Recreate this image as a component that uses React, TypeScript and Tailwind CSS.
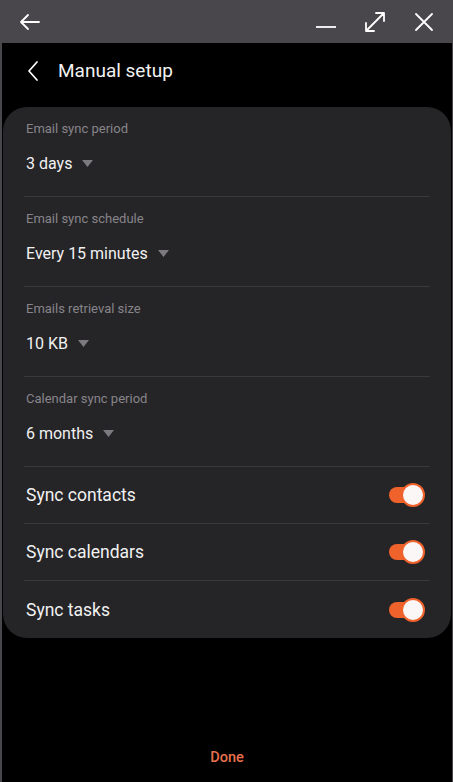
import { useState } from "react";

const pickers = [
  { label: "Email sync period", value: "3 days" },
  { label: "Email sync schedule", value: "Every 15 minutes" },
  { label: "Emails retrieval size", value: "10 KB" },
  { label: "Calendar sync period", value: "6 months" },
];

function Toggle({ on, onClick }: { on: boolean; onClick: () => void }) {
  return (
    <button onClick={onClick} className="relative w-[38px] h-[24px] flex items-center">
      <span className={`absolute left-[2px] right-[2px] h-[16px] rounded-full ${on ? "bg-[#f0622b]" : "bg-[#5a585c]"}`}></span>
      <span
        className={`absolute top-0 w-[24px] h-[24px] rounded-full bg-[#fbf7f6] border-2 ${on ? "right-0 border-[#f0622b]" : "left-0 border-[#5a585c]"}`}
      ></span>
    </button>
  );
}

export default function App() {
  const [toggles, setToggles] = useState([true, true, true]);
  const names = ["Sync contacts", "Sync calendars", "Sync tasks"];

  return (
    <div
      className="w-[453px] h-[782px] bg-[#49474b] flex flex-col overflow-hidden"
      style={{ fontFamily: "Roboto, 'Noto Sans', sans-serif" }}
    >
      {/* Title bar */}
      <div className="h-[43px] flex items-center px-[18px] text-white">
        <svg width="24" height="24" viewBox="0 0 24 24" fill="none" stroke="currentColor" strokeWidth="1.8" strokeLinecap="round" strokeLinejoin="round">
          <path d="M21 12H3M10 5l-7 7 7 7" />
        </svg>
        <div className="ml-auto flex items-center gap-[27px]">
          <svg width="22" height="22" viewBox="0 0 22 22" fill="none" stroke="currentColor" strokeWidth="1.8">
            <path d="M1 16h20" />
          </svg>
          <svg width="22" height="22" viewBox="0 0 22 22" fill="none" stroke="currentColor" strokeWidth="1.8" strokeLinecap="round" strokeLinejoin="round">
            <path d="M2 20L20 2M12 2h8v8M2 12v8h8" />
          </svg>
          <svg width="22" height="22" viewBox="0 0 22 22" fill="none" stroke="currentColor" strokeWidth="1.8" strokeLinecap="round">
            <path d="M3 3l16 16M19 3L3 19" />
          </svg>
        </div>
      </div>

      {/* Window body */}
      <div className="flex-1 bg-black ml-[2px] mr-[1px] flex flex-col">
        <div className="h-[56px] mb-[8px] flex items-center pl-[24px] text-white">
          <svg width="16" height="22" viewBox="0 0 16 22" fill="none" stroke="currentColor" strokeWidth="1.7" strokeLinecap="round" strokeLinejoin="round">
            <path d="M11 2L3 11l8 9" />
          </svg>
          <span className="ml-[16px] text-[19px] text-[#f2f2f2]">Manual setup</span>
        </div>

        <div className="mx-[1px] bg-[#252427] rounded-[24px] px-[21px]">
          {pickers.map((p) => (
            <div key={p.label} className="h-[90px] border-b border-[#3a393c] pl-[2px] pt-[14px]">
              <div className="text-[13px] text-[#87858a] leading-[16px]">{p.label}</div>
              <div className="mt-[17px] flex items-center text-[16px] text-[#f1f1f1] leading-[20px]">
                {p.value}
                <svg className="ml-[10px]" width="11" height="8" viewBox="0 0 11 8">
                  <path d="M0 0h11L5.5 7z" fill="#7c7a7e" />
                </svg>
              </div>
            </div>
          ))}
          {names.map((n, i) => (
            <div
              key={n}
              className={`h-[57px] flex items-center pl-[2px] pr-[5px] ${i < 2 ? "border-b border-[#3a393c]" : ""}`}
            >
              <span className="text-[17.5px] text-[#f1f1f1] mt-[1px]">{n}</span>
              <div className="ml-auto">
                <Toggle on={toggles[i]} onClick={() => setToggles(toggles.map((t, j) => (j === i ? !t : t)))} />
              </div>
            </div>
          ))}
        </div>

        <div className="mt-auto h-[48px] flex items-center justify-center">
          <button className="text-[14.5px] font-medium text-[#e8704c]">Done</button>
        </div>
      </div>
    </div>
  );
}
